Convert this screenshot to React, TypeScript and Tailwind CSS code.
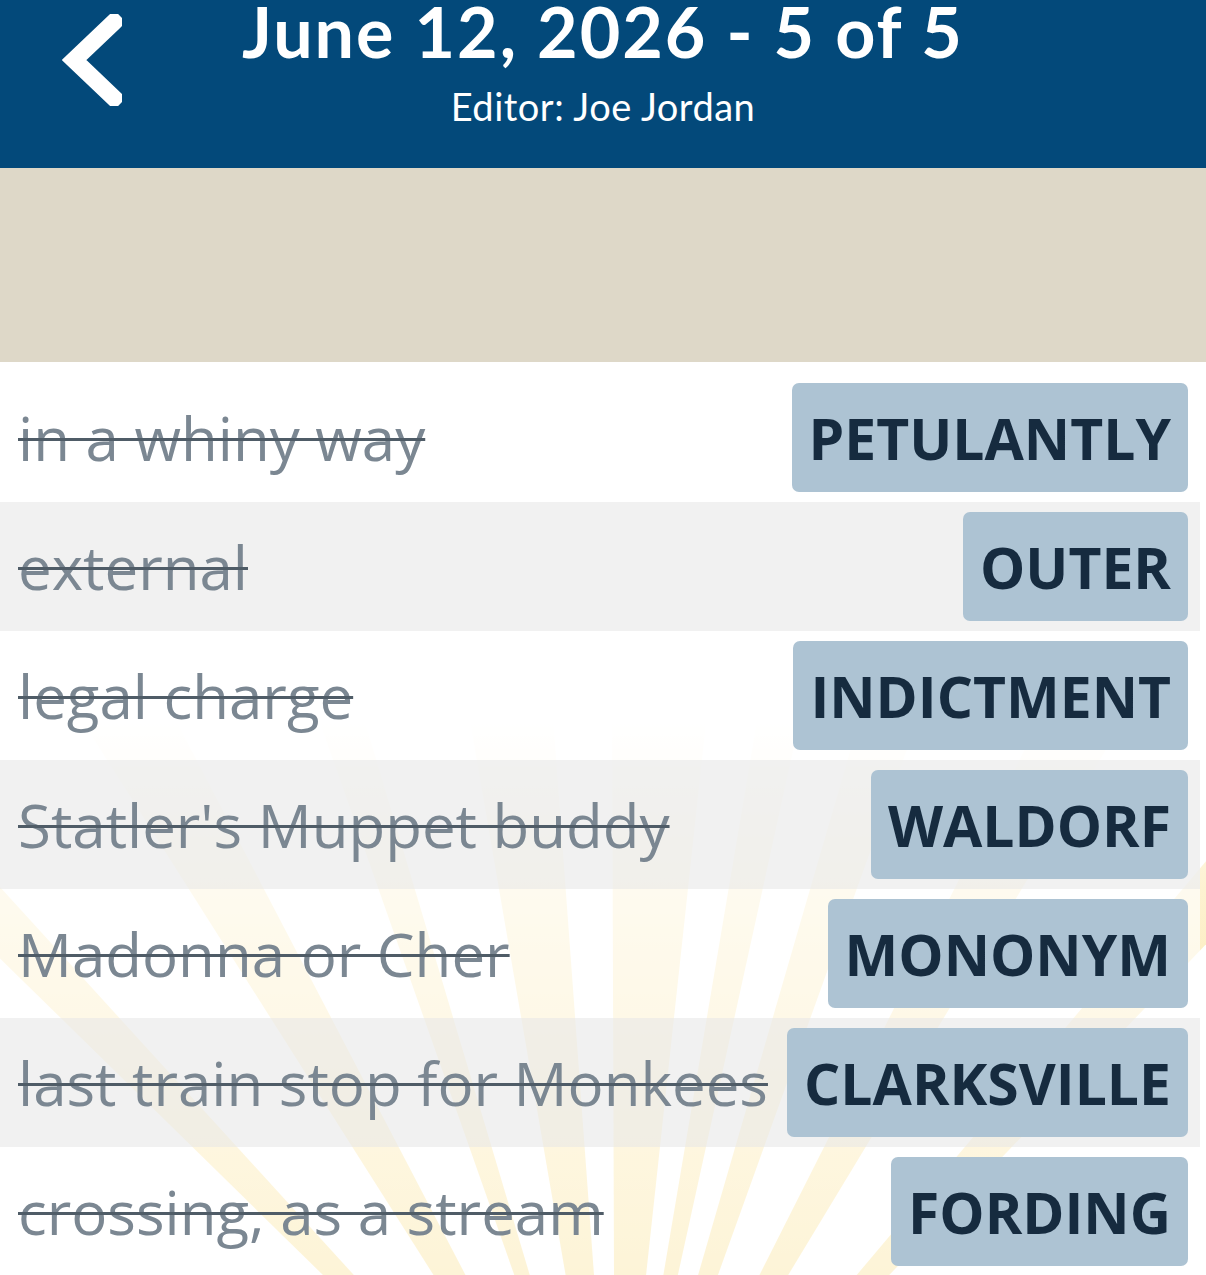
import React from "react";

type Entry = { clue: string; answer: string };

const ENTRIES: Entry[] = [
  { clue: "in a whiny way", answer: "PETULANTLY" },
  { clue: "external", answer: "OUTER" },
  { clue: "legal charge", answer: "INDICTMENT" },
  { clue: "Statler's Muppet buddy", answer: "WALDORF" },
  { clue: "Madonna or Cher", answer: "MONONYM" },
  { clue: "last train stop for Monkees", answer: "CLARKSVILLE" },
  { clue: "crossing, as a stream", answer: "FORDING" },
];

// [angle, half-width] of rays fanning out from below the bottom edge
const RAYS: [number, number][] = [
  [-44, 1.6],
  [-30, 2.4],
  [-18, 1.4],
  [-7, 2.8],
  [3, 3.2],
  [11, 1.4],
  [18, 1.8],
  [29, 2.2],
  [42, 1.8],
];

function Sunburst() {
  const cx = 615;
  const cy = 1560;
  const len = 1200;
  return (
    <svg
      className="pointer-events-none absolute inset-0 h-full w-full"
      viewBox="0 362 1206 913"
      preserveAspectRatio="none"
      aria-hidden
    >
      <defs>
        <linearGradient
          id="fade"
          gradientUnits="userSpaceOnUse"
          x1="0"
          y1="720"
          x2="0"
          y2="1280"
        >
          <stop offset="0" stopColor="#f8d466" stopOpacity="0" />
          <stop offset="0.3" stopColor="#f8d466" stopOpacity="0.3" />
          <stop offset="1" stopColor="#f8d466" stopOpacity="0.75" />
        </linearGradient>
      </defs>
      {RAYS.map(([deg, w]) => {
        const a1 = ((deg - w - 90) * Math.PI) / 180;
        const a2 = ((deg + w - 90) * Math.PI) / 180;
        const p = `${cx},${cy} ${cx + len * Math.cos(a1)},${cy + len * Math.sin(a1)} ${cx + len * Math.cos(a2)},${cy + len * Math.sin(a2)}`;
        return <polygon key={deg} points={p} fill="url(#fade)" />;
      })}
    </svg>
  );
}

function Row({ entry, shaded }: { entry: Entry; shaded: boolean }) {
  return (
    <li
      className={`flex h-[129px] items-center justify-between gap-[14px] pl-[18px] pr-3 ${
        shaded ? "bg-[#eeeeee]/85" : "bg-white/65"
      }`}
    >
      <span className="text-[60px] leading-none text-[#7b8792] line-through decoration-[#4f5c67] decoration-[3px] whitespace-nowrap">
        {entry.clue}
      </span>
      <span className="flex h-[109px] shrink-0 items-center rounded-[7px] bg-[#adc3d3] px-[17px] pt-[2px] text-[57px] font-bold leading-none text-[#162b3f]">
        {entry.answer}
      </span>
    </li>
  );
}

export default function App() {
  return (
    <div className="h-[1275px] w-[1206px] overflow-hidden bg-white font-['Open_Sans',_sans-serif]">
      <header className="relative flex h-[168px] flex-col items-center bg-[#03497a] text-white">
        <svg
          className="absolute left-[62px] top-[14px]"
          width="60"
          height="92"
          viewBox="0 0 60 92"
          aria-hidden
        >
          <polyline
            points="52,8 12,46 52,84"
            fill="none"
            stroke="#fff"
            strokeWidth="17"
            strokeLinecap="square"
            strokeLinejoin="miter"
          />
        </svg>
        <h1 className="-mt-[14px] font-['Lato',_sans-serif] text-[70px] font-bold leading-[90px] tracking-[2px]">
          June 12, 2026 - 5 of 5
        </h1>
        <p className="mt-[8px] font-['Lato',_sans-serif] text-[38px] leading-[44px] tracking-[0.5px]">
          Editor: Joe Jordan
        </p>
      </header>
      <div className="h-[194px] bg-[#ded8c8]" />
      <div className="relative pr-[6px] pt-[11px]">
        <Sunburst />
        <ul className="relative">
          {ENTRIES.map((e, i) => (
            <Row key={e.answer} entry={e} shaded={i % 2 === 1} />
          ))}
        </ul>
      </div>
    </div>
  );
}
